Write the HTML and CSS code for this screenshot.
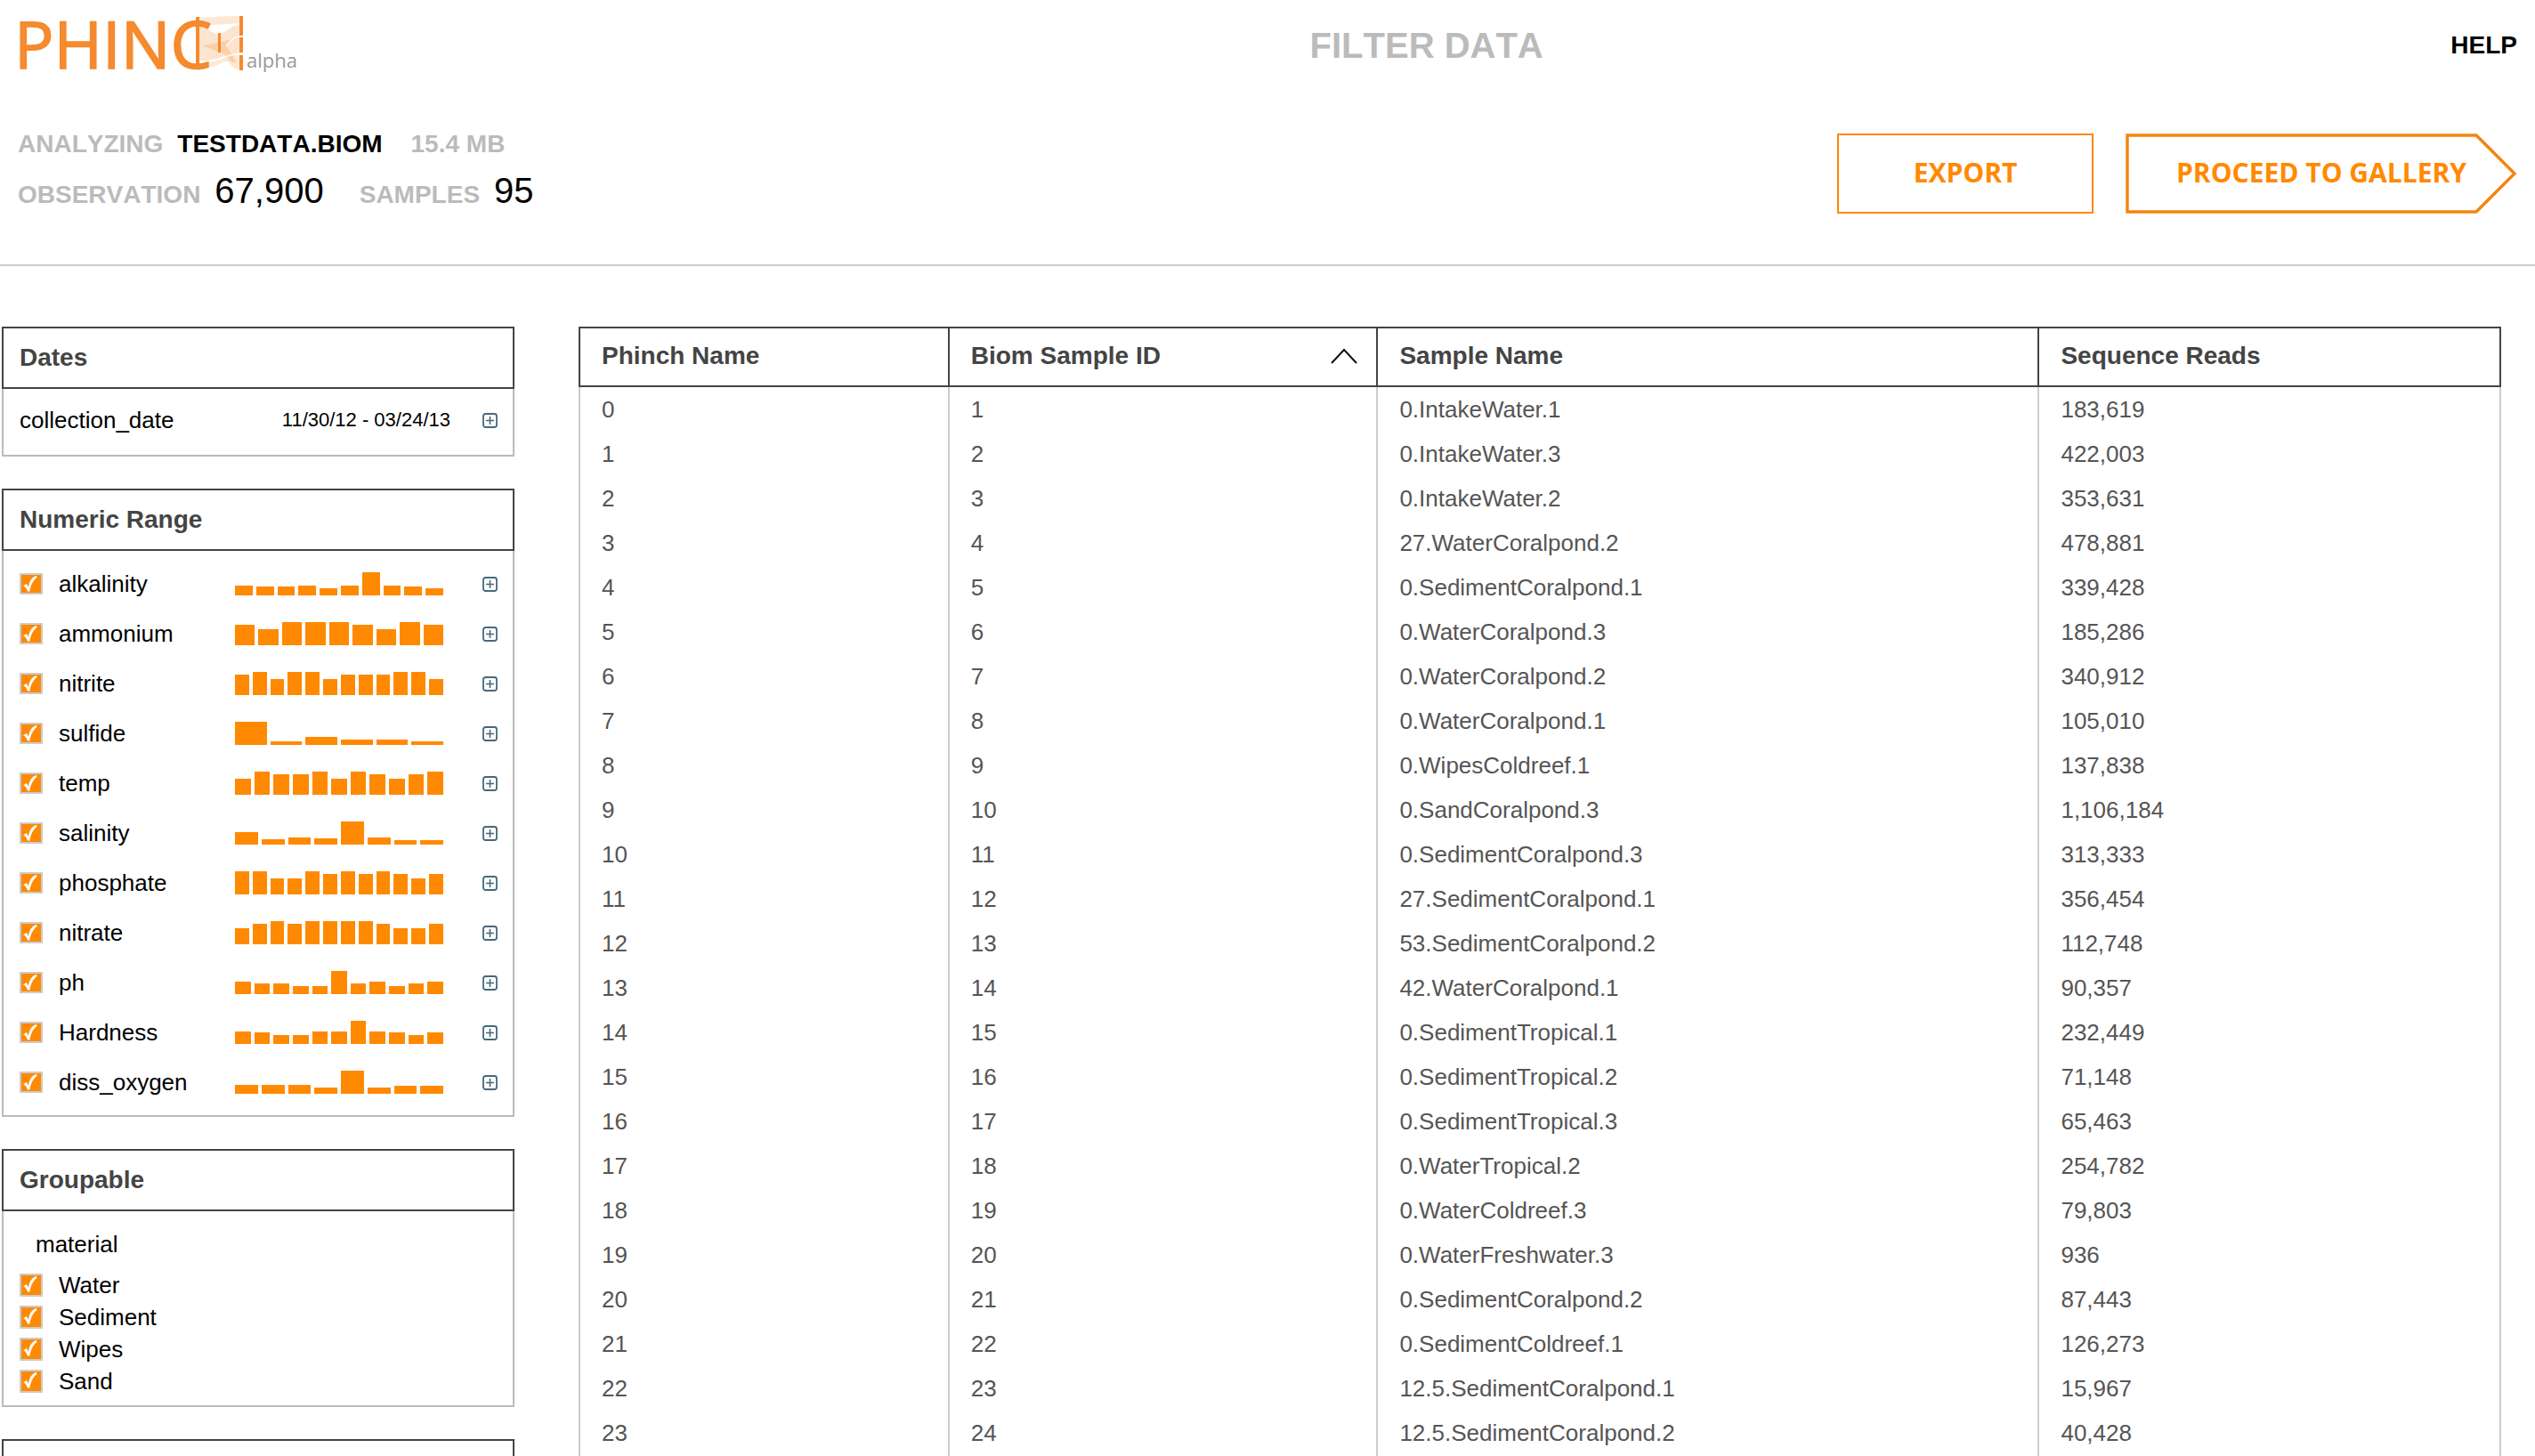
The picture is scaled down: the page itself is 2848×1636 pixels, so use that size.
FILE: index.html
```html
<!DOCTYPE html>
<html lang="en">
<head>
<meta charset="utf-8">
<title>Phinch - Filter Data</title>
<link rel="stylesheet" href="styles.css">
</head>
<body>
<svg class="sprite" aria-hidden="true">
  <symbol id="plus" viewBox="0 0 17 17">
    <rect x="1" y="1" width="15" height="15" rx="2.500" fill="none" stroke="#44697d" stroke-width="1.800"/>
    <path d="M8.500 4v9M4 8.500h9" stroke="#44697d" stroke-width="1.600" fill="none"/>
  </symbol>
</svg>

<header class="topbar">
  <a class="logo" href="#">
    <svg class="logo-art" viewBox="20 0 432 100" role="img" aria-label="Phinch alpha">
      <g transform="translate(10 5) scale(.33333)">
        <path d="M640 41L778 35V61L640 69Z" fill="#fde8d6"/>
        <path d="M640 71C676 72 682 98 708 97C730 96 746 66 778 66V165C728 160 716 196 640 186Z" fill="#fce4d0"/>
        <path d="M640 194C716 196 732 162 778 168V218C750 218 748 190 734 189C716 190 706 206 672 210L640 212Z" fill="#fde8d6"/>
        <path d="M652 136C690 130 752 116 776 104V110C752 116 738 122 730 136C744 150 756 176 768 192H750C736 176 734 166 714 160C694 156 676 144 652 136Z" fill="#fad0a9"/>
        <path d="M640 190C716 190 732 162 778 165M734 137C748 116 762 107 778 105" fill="none" stroke="#fff" stroke-width="4"/>
      </g>
      <text class="logo-word" x="16" y="76">PHINC</text>
      <g fill="#f58a2e">
        <rect x="220" y="18" width="4" height="55"/>
        <rect x="245" y="36" width="3" height="22"/>
        <rect x="269" y="17" width="4" height="22"/>
        <rect x="269" y="41" width="4" height="17"/>
        <rect x="269" y="61" width="4" height="17"/>
      </g>
      <text class="logo-tag" x="277" y="75">alpha</text>
    </svg>
  </a>
  <h1 class="title">FILTER DATA</h1>
  <a class="help" href="#">HELP</a>
</header>

<section class="summary">
  <div class="stats">
    <p class="stat-file"><span>ANALYZING</span><b>TESTDATA.BIOM</b><span class="next">15.4 MB</span></p>
    <p class="stat-counts"><span>OBSERVATION</span><b>67,900</b><span class="next">SAMPLES</span><b>95</b></p>
  </div>
  <div class="actions">
    <button class="btn export" type="button">EXPORT</button>
    <button class="btn proceed" type="button">
      <svg class="arrow" viewBox="0 0 440 90" preserveAspectRatio="none" aria-hidden="true"><path d="M2 2H394L437 45L394 88H2Z" fill="none" stroke="#f5840f" stroke-width="3.400"/></svg>
      PROCEED TO GALLERY
    </button>
  </div>
</section>

<main class="content">
  <aside class="filters">
    <section class="panel">
      <h2>Dates</h2>
      <div class="panel-body dates">
        <div class="row">
          <span class="name">collection_date</span>
          <span class="range">11/30/12 - 03/24/13</span>
          <button class="expand" type="button" aria-label="Expand collection_date"><svg><use href="#plus"/></svg></button>
        </div>
      </div>
    </section>

    <section class="panel">
      <h2>Numeric Range</h2>
      <div class="panel-body">
        <div class="row">
          <label class="name"><input type="checkbox" checked>alkalinity</label>
          <div class="bars"><i style="height:11px"></i><i style="height:10px"></i><i style="height:10px"></i><i style="height:11px"></i><i style="height:8px"></i><i style="height:11px"></i><i style="height:26px"></i><i style="height:11px"></i><i style="height:10px"></i><i style="height:8px"></i></div>
          <button class="expand" type="button" aria-label="Expand alkalinity"><svg><use href="#plus"/></svg></button>
        </div>
        <div class="row">
          <label class="name"><input type="checkbox" checked>ammonium</label>
          <div class="bars"><i style="height:23px"></i><i style="height:18px"></i><i style="height:26px"></i><i style="height:26px"></i><i style="height:26px"></i><i style="height:23px"></i><i style="height:18px"></i><i style="height:26px"></i><i style="height:23px"></i></div>
          <button class="expand" type="button" aria-label="Expand ammonium"><svg><use href="#plus"/></svg></button>
        </div>
        <div class="row">
          <label class="name"><input type="checkbox" checked>nitrite</label>
          <div class="bars"><i style="height:23px"></i><i style="height:26px"></i><i style="height:18px"></i><i style="height:26px"></i><i style="height:26px"></i><i style="height:18px"></i><i style="height:23px"></i><i style="height:23px"></i><i style="height:23px"></i><i style="height:26px"></i><i style="height:26px"></i><i style="height:18px"></i></div>
          <button class="expand" type="button" aria-label="Expand nitrite"><svg><use href="#plus"/></svg></button>
        </div>
        <div class="row">
          <label class="name"><input type="checkbox" checked>sulfide</label>
          <div class="bars"><i style="height:26px"></i><i style="height:4px"></i><i style="height:9px"></i><i style="height:6px"></i><i style="height:6px"></i><i style="height:4px"></i></div>
          <button class="expand" type="button" aria-label="Expand sulfide"><svg><use href="#plus"/></svg></button>
        </div>
        <div class="row">
          <label class="name"><input type="checkbox" checked>temp</label>
          <div class="bars"><i style="height:18px"></i><i style="height:26px"></i><i style="height:23px"></i><i style="height:23px"></i><i style="height:26px"></i><i style="height:18px"></i><i style="height:26px"></i><i style="height:23px"></i><i style="height:18px"></i><i style="height:23px"></i><i style="height:26px"></i></div>
          <button class="expand" type="button" aria-label="Expand temp"><svg><use href="#plus"/></svg></button>
        </div>
        <div class="row">
          <label class="name"><input type="checkbox" checked>salinity</label>
          <div class="bars"><i style="height:14px"></i><i style="height:6px"></i><i style="height:8px"></i><i style="height:7px"></i><i style="height:26px"></i><i style="height:8px"></i><i style="height:5px"></i><i style="height:5px"></i></div>
          <button class="expand" type="button" aria-label="Expand salinity"><svg><use href="#plus"/></svg></button>
        </div>
        <div class="row">
          <label class="name"><input type="checkbox" checked>phosphate</label>
          <div class="bars"><i style="height:26px"></i><i style="height:26px"></i><i style="height:18px"></i><i style="height:18px"></i><i style="height:26px"></i><i style="height:23px"></i><i style="height:26px"></i><i style="height:23px"></i><i style="height:26px"></i><i style="height:23px"></i><i style="height:18px"></i><i style="height:23px"></i></div>
          <button class="expand" type="button" aria-label="Expand phosphate"><svg><use href="#plus"/></svg></button>
        </div>
        <div class="row">
          <label class="name"><input type="checkbox" checked>nitrate</label>
          <div class="bars"><i style="height:18px"></i><i style="height:23px"></i><i style="height:26px"></i><i style="height:23px"></i><i style="height:26px"></i><i style="height:26px"></i><i style="height:26px"></i><i style="height:26px"></i><i style="height:23px"></i><i style="height:18px"></i><i style="height:18px"></i><i style="height:23px"></i></div>
          <button class="expand" type="button" aria-label="Expand nitrate"><svg><use href="#plus"/></svg></button>
        </div>
        <div class="row">
          <label class="name"><input type="checkbox" checked>ph</label>
          <div class="bars"><i style="height:14px"></i><i style="height:12px"></i><i style="height:12px"></i><i style="height:9px"></i><i style="height:9px"></i><i style="height:26px"></i><i style="height:12px"></i><i style="height:14px"></i><i style="height:9px"></i><i style="height:12px"></i><i style="height:14px"></i></div>
          <button class="expand" type="button" aria-label="Expand ph"><svg><use href="#plus"/></svg></button>
        </div>
        <div class="row">
          <label class="name"><input type="checkbox" checked>Hardness</label>
          <div class="bars"><i style="height:14px"></i><i style="height:13px"></i><i style="height:10px"></i><i style="height:10px"></i><i style="height:14px"></i><i style="height:14px"></i><i style="height:26px"></i><i style="height:14px"></i><i style="height:13px"></i><i style="height:10px"></i><i style="height:13px"></i></div>
          <button class="expand" type="button" aria-label="Expand Hardness"><svg><use href="#plus"/></svg></button>
        </div>
        <div class="row">
          <label class="name"><input type="checkbox" checked>diss_oxygen</label>
          <div class="bars"><i style="height:10px"></i><i style="height:10px"></i><i style="height:10px"></i><i style="height:7px"></i><i style="height:26px"></i><i style="height:7px"></i><i style="height:9px"></i><i style="height:9px"></i></div>
          <button class="expand" type="button" aria-label="Expand diss_oxygen"><svg><use href="#plus"/></svg></button>
        </div>
      </div>
    </section>

    <section class="panel">
      <h2>Groupable</h2>
      <div class="panel-body groups">
        <h3>material</h3>
        <label class="name"><input type="checkbox" checked>Water</label>
        <label class="name"><input type="checkbox" checked>Sediment</label>
        <label class="name"><input type="checkbox" checked>Wipes</label>
        <label class="name"><input type="checkbox" checked>Sand</label>
      </div>
    </section>

    <section class="panel"><h2></h2></section>
  </aside>

  <table class="samples">
    <colgroup><col class="c-name"><col class="c-id"><col class="c-sample"><col></colgroup>
    <thead>
      <tr>
        <th scope="col">Phinch Name</th>
        <th scope="col" aria-sort="ascending"><button class="sort" type="button">Biom Sample ID<svg viewBox="0 0 30 18" aria-hidden="true"><path d="M1 17L15 2L29 17" fill="none" stroke="#111" stroke-width="2"/></svg></button></th>
        <th scope="col">Sample Name</th>
        <th scope="col">Sequence Reads</th>
      </tr>
    </thead>
    <tbody>
      <tr><td>0</td><td>1</td><td>0.IntakeWater.1</td><td>183,619</td></tr>
      <tr><td>1</td><td>2</td><td>0.IntakeWater.3</td><td>422,003</td></tr>
      <tr><td>2</td><td>3</td><td>0.IntakeWater.2</td><td>353,631</td></tr>
      <tr><td>3</td><td>4</td><td>27.WaterCoralpond.2</td><td>478,881</td></tr>
      <tr><td>4</td><td>5</td><td>0.SedimentCoralpond.1</td><td>339,428</td></tr>
      <tr><td>5</td><td>6</td><td>0.WaterCoralpond.3</td><td>185,286</td></tr>
      <tr><td>6</td><td>7</td><td>0.WaterCoralpond.2</td><td>340,912</td></tr>
      <tr><td>7</td><td>8</td><td>0.WaterCoralpond.1</td><td>105,010</td></tr>
      <tr><td>8</td><td>9</td><td>0.WipesColdreef.1</td><td>137,838</td></tr>
      <tr><td>9</td><td>10</td><td>0.SandCoralpond.3</td><td>1,106,184</td></tr>
      <tr><td>10</td><td>11</td><td>0.SedimentCoralpond.3</td><td>313,333</td></tr>
      <tr><td>11</td><td>12</td><td>27.SedimentCoralpond.1</td><td>356,454</td></tr>
      <tr><td>12</td><td>13</td><td>53.SedimentCoralpond.2</td><td>112,748</td></tr>
      <tr><td>13</td><td>14</td><td>42.WaterCoralpond.1</td><td>90,357</td></tr>
      <tr><td>14</td><td>15</td><td>0.SedimentTropical.1</td><td>232,449</td></tr>
      <tr><td>15</td><td>16</td><td>0.SedimentTropical.2</td><td>71,148</td></tr>
      <tr><td>16</td><td>17</td><td>0.SedimentTropical.3</td><td>65,463</td></tr>
      <tr><td>17</td><td>18</td><td>0.WaterTropical.2</td><td>254,782</td></tr>
      <tr><td>18</td><td>19</td><td>0.WaterColdreef.3</td><td>79,803</td></tr>
      <tr><td>19</td><td>20</td><td>0.WaterFreshwater.3</td><td>936</td></tr>
      <tr><td>20</td><td>21</td><td>0.SedimentCoralpond.2</td><td>87,443</td></tr>
      <tr><td>21</td><td>22</td><td>0.SedimentColdreef.1</td><td>126,273</td></tr>
      <tr><td>22</td><td>23</td><td>12.5.SedimentCoralpond.1</td><td>15,967</td></tr>
      <tr><td>23</td><td>24</td><td>12.5.SedimentCoralpond.2</td><td>40,428</td></tr>
      <tr><td></td><td></td><td></td><td></td></tr>
    </tbody>
  </table>
</main>
</body>
</html>
```
FILE: styles.css
```css
* { box-sizing: border-box; }

body {
  margin: 0;
  height: 100vh;
  overflow: hidden;
  background: #fff;
  color: #000;
  font-family: "Liberation Sans", Arial, sans-serif;
  font-size: 26px;
}

h1, h2, h3, p { margin: 0; }
a { color: inherit; text-decoration: none; }

button {
  padding: 0;
  border: 0;
  background: none;
  color: inherit;
  font: inherit;
}

.sprite { display: none; }

/* Top bar */
.topbar {
  display: flex;
  align-items: center;
  justify-content: space-between;
  height: 102px;
  padding: 0 20px;
}

.logo, .logo-art { display: block; width: 432px; }
.logo-art { height: 100px; overflow: visible; }
.logo-word { font: 74px "Open Sans", sans-serif; fill: #f58a2e; stroke: #f58a2e; stroke-width: 1.5px; }
.logo-tag { font: 22px "Open Sans", sans-serif; fill: #999; }
.title { font-size: 40px; font-weight: bold; color: #bbb; font-kerning: none; }
.help { font-size: 28px; font-weight: bold; }

/* Summary */
.summary {
  display: flex;
  justify-content: space-between;
  align-items: flex-start;
  padding: 48px 20px 56px;
  border-bottom: 2px solid #ccc;
}

.stats { display: grid; gap: 18px; font-kerning: none; }
.stats p { display: flex; align-items: baseline; gap: 16px; }
.stats span { font-size: 28px; font-weight: bold; color: #bbb; }
.stat-file { line-height: 24px; }
.stat-file b { font-size: 28px; }
.stat-file .next { margin-left: 16px; }
.stat-counts { line-height: 44px; }
.stat-counts b { font-size: 40px; font-weight: normal; }
.stat-counts .next { margin-left: 24px; }

.actions { display: flex; gap: 36px; }

.btn {
  height: 90px;
  padding-bottom: 4px;
  font: bold 30px "Open Sans", sans-serif;
  color: #ff8900;
}

.export { width: 288px; border: 2px solid #ff8900; }
.proceed { position: relative; width: 440px; }
.arrow { position: absolute; inset: 0; width: 100%; height: 100%; }

/* Main area */
.content {
  display: grid;
  grid-template-columns: 576px 1fr;
  gap: 72px;
  align-items: start;
  padding: 68px 38px 0 2px;
}

.filters { display: grid; gap: 36px; }

.panel h2 {
  height: 70px;
  padding-left: 18px;
  border: 2px solid #444;
  font-size: 28px;
  line-height: 66px;
  color: #444;
}

.panel-body {
  padding: 9px 17px 9px 18px;
  border: 2px solid #bbb;
  border-top: 0;
}

.panel-body.dates { padding-top: 7px; padding-bottom: 11px; }

.row { display: flex; align-items: center; height: 56px; }
.name { display: flex; flex: 1; align-items: center; gap: 18px; }
.range { font-size: 22px; margin-right: 36px; }

input[type="checkbox"] {
  appearance: none;
  flex: none;
  width: 26px;
  height: 24px;
  margin: 0;
  border: 2px solid #ccc;
  background: #ff8900;
}

input[type="checkbox"]:checked {
  background: #ff8900 url("data:image/svg+xml,%3Csvg xmlns='http://www.w3.org/2000/svg' width='26' height='24'%3E%3Cpath d='M4 14.500L7.500 12C8.700 13 9.300 14.500 9.800 16C11 9 14 4 19 3L19.500 5C15 8 12 15 11.500 20.500H9C8 17 6.500 15 4 14.500Z' fill='%23fff'/%3E%3C/svg%3E") no-repeat border-box;
}

.bars {
  display: flex;
  align-items: flex-end;
  gap: 4px;
  width: 234px;
  height: 26px;
  margin-right: 44px;
}

.bars i { flex: 1; background: #ff8900; }

.expand, .expand svg { display: block; width: 17px; height: 17px; }

.groups h3 {
  padding-left: 18px;
  font-size: 26px;
  font-weight: normal;
  line-height: 56px;
}

.groups .name { height: 36px; }
.groups input[type="checkbox"] { height: 26px; }

/* Sample table */
.samples {
  width: 100%;
  table-layout: fixed;
  border-spacing: 0;
  text-align: left;
}

.c-name { width: 19.2%; }
.c-id { width: 22.3%; }
.c-sample { width: 34.4%; }

.samples th {
  height: 68px;
  padding: 0 0 3px 24px;
  border: 2px solid #444;
  border-right: 0;
  font-size: 28px;
  color: #444;
}

.samples td {
  height: 50px;
  padding: 0 0 0 24px;
  border-left: 2px solid #ccc;
  color: #555;
}

.samples th:last-child { border-right: 2px solid #444; }
.samples td:last-child { border-right: 2px solid #ccc; }

.sort {
  display: flex;
  align-items: center;
  justify-content: space-between;
  width: 100%;
  padding-right: 21px;
}

.sort svg { width: 30px; height: 18px; }
```
